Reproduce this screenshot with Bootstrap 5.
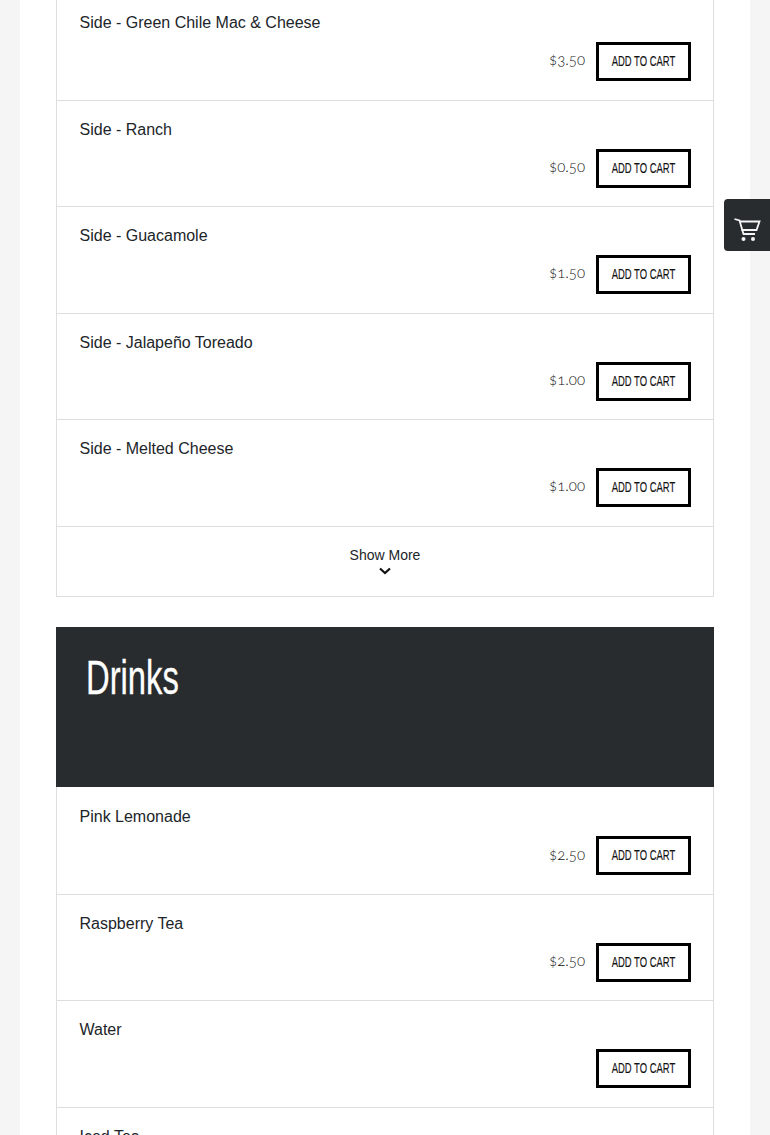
<!DOCTYPE html>
<html lang="en">
<head>
    <meta charset="UTF-8">
    <meta name="viewport" content="width=device-width, initial-scale=1.0">
    <title>Menu</title>
    <link href="https://cdn.jsdelivr.net/npm/bootstrap@5.3.0/dist/css/bootstrap.min.css" rel="stylesheet">
    <style>
        html, body {
            height: 1135px;
            overflow: hidden;
        }
        body {
            background: #f5f5f5;
            font-family: "Liberation Sans", Arial, sans-serif;
            color: #212529;
        }
        .page-sheet {
            width: 730px;
            margin-left: 20px;
            padding: 0 36px;
            background: #fff;
            height: 1135px;
            overflow: hidden;
        }
        .menu-list {
            margin-top: -6px;
            border-left: 1px solid #dedede;
            border-right: 1px solid #dedede;
        }
        .drinks-list {
            margin-top: 0;
            padding-top: 1.75px;
        }
        .menu-row {
            height: 106.5px;
            padding: 17px 22px 0 22.5px;
            border-bottom: 1px solid #dedede;
        }
        .item-name {
            font-size: 16px;
            line-height: 24px;
            color: #212529;
        }
        .item-buy {
            margin-top: 7px;
            height: 39px;
        }
        .item-price {
            font-family: Lato, "Liberation Sans", sans-serif;
            font-size: 15px;
            font-weight: 300;
            font-variant-numeric: oldstyle-nums;
            color: #111;
            margin-right: 11px;
            position: relative;
            top: -2px;
        }
        .cart-btn {
            width: 95px;
            height: 39px;
            padding: 0 0 2px;
            border: 3px solid #000;
            border-radius: 0;
            background: #fff;
            color: #111;
            font-family: "Liberation Sans", sans-serif;
            font-size: 15px;
            line-height: 33px;
            text-transform: uppercase;
        }
        .cart-label {
            flex-shrink: 0;
            display: inline-block;
            white-space: nowrap;
            transform: scaleX(0.63);
            -webkit-text-stroke: 0.15px #111;
        }
        .show-more {
            height: 70px;
            padding-top: 20px;
            border-bottom: 1px solid #dedede;
            font-size: 14px;
            line-height: 17px;
            color: #212529;
        }
        .show-more svg {
            display: block;
            margin: 3px auto 0;
        }
        .section-head {
            height: 160px;
            margin-top: 30px;
            padding: 21px 30px;
            background: #292c2e;
            color: #fff;
        }
        .section-head h2 {
            margin: 0;
            font-family: "Liberation Sans", sans-serif;
            font-size: 47.5px;
            line-height: 60px;
            font-weight: 400;
            transform: scaleX(0.69);
            transform-origin: left center;
            -webkit-text-stroke: 0.3px #fff;
        }
        .float-cart {
            position: fixed;
            top: 199px;
            right: 0;
            width: 46px;
            height: 52px;
            padding-top: 10px;
            background: #292c2e;
            border-radius: 4px 0 0 4px;
        }
    </style>
</head>
<body>
    <div class="page-sheet">
        <div class="menu-list">
            <div class="menu-row">
                <div class="item-name">Side - Green Chile Mac &amp; Cheese</div>
                <div class="item-buy d-flex justify-content-end align-items-center">
                    <span class="item-price">$3.50</span>
                    <button class="btn cart-btn d-flex justify-content-center align-items-center" type="button"><span class="cart-label">Add to cart</span></button>
                </div>
            </div>
            <div class="menu-row">
                <div class="item-name">Side - Ranch</div>
                <div class="item-buy d-flex justify-content-end align-items-center">
                    <span class="item-price">$0.50</span>
                    <button class="btn cart-btn d-flex justify-content-center align-items-center" type="button"><span class="cart-label">Add to cart</span></button>
                </div>
            </div>
            <div class="menu-row">
                <div class="item-name">Side - Guacamole</div>
                <div class="item-buy d-flex justify-content-end align-items-center">
                    <span class="item-price">$1.50</span>
                    <button class="btn cart-btn d-flex justify-content-center align-items-center" type="button"><span class="cart-label">Add to cart</span></button>
                </div>
            </div>
            <div class="menu-row">
                <div class="item-name">Side - Jalapeño Toreado</div>
                <div class="item-buy d-flex justify-content-end align-items-center">
                    <span class="item-price">$1.00</span>
                    <button class="btn cart-btn d-flex justify-content-center align-items-center" type="button"><span class="cart-label">Add to cart</span></button>
                </div>
            </div>
            <div class="menu-row">
                <div class="item-name">Side - Melted Cheese</div>
                <div class="item-buy d-flex justify-content-end align-items-center">
                    <span class="item-price">$1.00</span>
                    <button class="btn cart-btn d-flex justify-content-center align-items-center" type="button"><span class="cart-label">Add to cart</span></button>
                </div>
            </div>
            <div class="show-more text-center">
                Show More
                <svg width="12" height="8" viewBox="0 0 12 8"><path d="M1 1.500l5 4.500 5-4.500" fill="none" stroke="#111" stroke-width="2.200"/></svg>
            </div>
        </div>

        <div class="section-head"><h2>Drinks</h2></div>

        <div class="menu-list drinks-list">
            <div class="menu-row">
                <div class="item-name">Pink Lemonade</div>
                <div class="item-buy d-flex justify-content-end align-items-center">
                    <span class="item-price">$2.50</span>
                    <button class="btn cart-btn d-flex justify-content-center align-items-center" type="button"><span class="cart-label">Add to cart</span></button>
                </div>
            </div>
            <div class="menu-row">
                <div class="item-name">Raspberry Tea</div>
                <div class="item-buy d-flex justify-content-end align-items-center">
                    <span class="item-price">$2.50</span>
                    <button class="btn cart-btn d-flex justify-content-center align-items-center" type="button"><span class="cart-label">Add to cart</span></button>
                </div>
            </div>
            <div class="menu-row">
                <div class="item-name">Water</div>
                <div class="item-buy d-flex justify-content-end align-items-center">
                    <button class="btn cart-btn d-flex justify-content-center align-items-center" type="button"><span class="cart-label">Add to cart</span></button>
                </div>
            </div>
            <div class="menu-row">
                <div class="item-name">Iced Tea</div>
            </div>
        </div>
    </div>

    <div class="float-cart d-flex align-items-center justify-content-center">
        <svg width="27" height="24" viewBox="0 0 27 24" fill="none" stroke="#f5f5f5" stroke-width="1.800">
            <path d="M0.500 1l5 1.500 4 13.500h11.500"/>
            <path d="M5.500 3.500h20l-3 8.500H7.500"/>
            <circle cx="9.500" cy="21" r="2" fill="#f5f5f5" stroke="none"/>
            <circle cx="19" cy="21" r="2" fill="#f5f5f5" stroke="none"/>
        </svg>
    </div>
</body>
</html>
